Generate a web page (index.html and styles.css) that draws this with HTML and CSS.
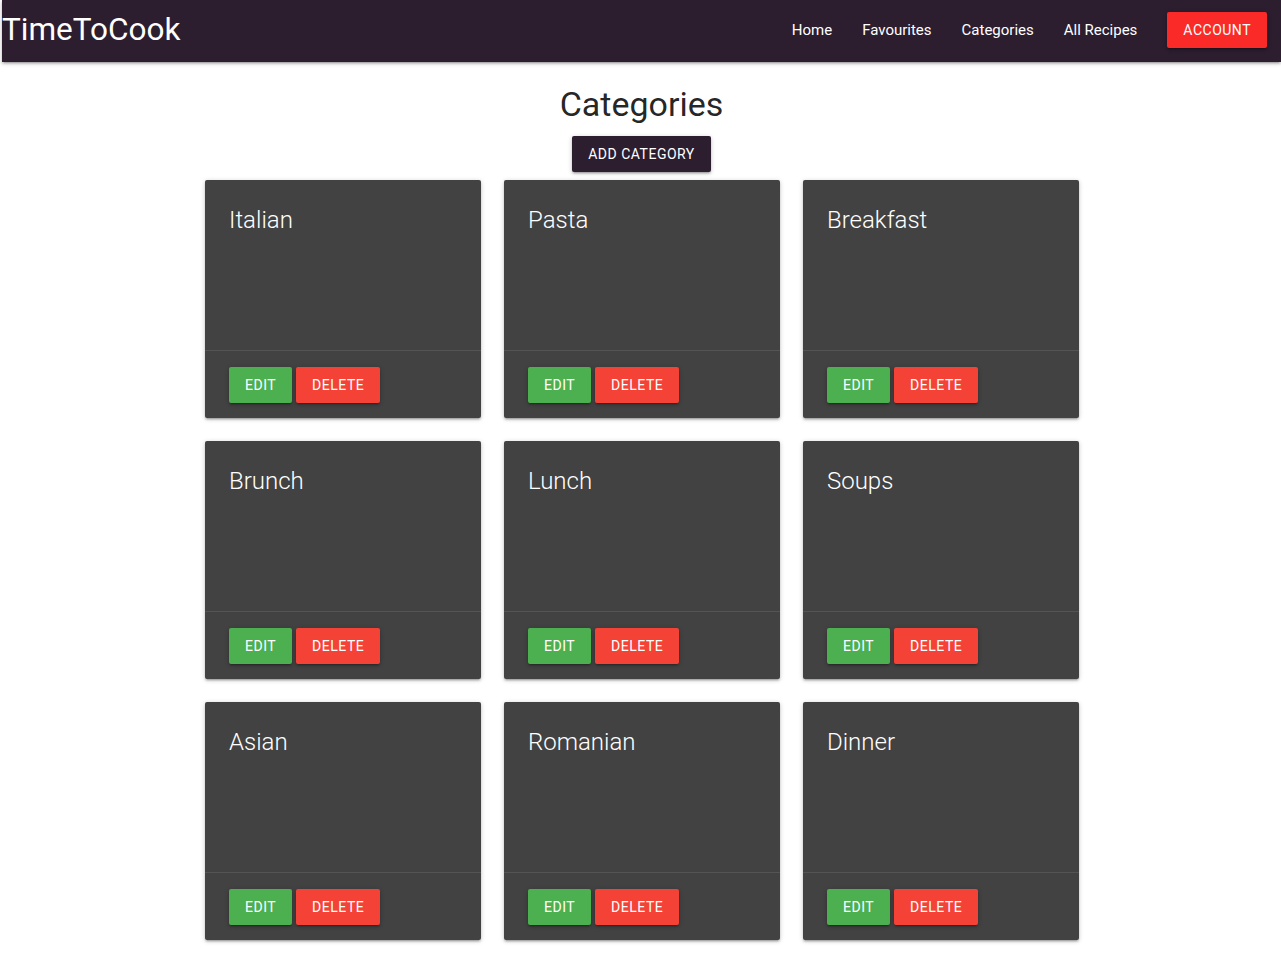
FILE: index.html
```html
<!DOCTYPE html>
<html lang="en">
<head>
<meta charset="utf-8">
<title>TimeToCook</title>
<link rel="stylesheet" href="styles.css">
</head>
<body>
<nav class="nav">
  <a class="brand" href="#">TimeToCook</a>
  <ul class="nav-links">
    <li><a href="#">Home</a></li>
    <li><a href="#">Favourites</a></li>
    <li><a href="#">Categories</a></li>
    <li><a href="#">All Recipes</a></li>
    <li><a class="btn btn-account" href="#">Account</a></li>
  </ul>
</nav>
<main class="main">
  <h4 class="page-title">Categories</h4>
  <a class="btn btn-add" href="#">Add Category</a>
  <div class="grid">
    <div class="card"><div class="card-content"><span class="card-title">Italian</span></div><div class="card-action"><a class="btn btn-edit" href="#">Edit</a><a class="btn btn-delete" href="#">Delete</a></div></div>
    <div class="card"><div class="card-content"><span class="card-title">Pasta</span></div><div class="card-action"><a class="btn btn-edit" href="#">Edit</a><a class="btn btn-delete" href="#">Delete</a></div></div>
    <div class="card"><div class="card-content"><span class="card-title">Breakfast</span></div><div class="card-action"><a class="btn btn-edit" href="#">Edit</a><a class="btn btn-delete" href="#">Delete</a></div></div>
    <div class="card"><div class="card-content"><span class="card-title">Brunch</span></div><div class="card-action"><a class="btn btn-edit" href="#">Edit</a><a class="btn btn-delete" href="#">Delete</a></div></div>
    <div class="card"><div class="card-content"><span class="card-title">Lunch</span></div><div class="card-action"><a class="btn btn-edit" href="#">Edit</a><a class="btn btn-delete" href="#">Delete</a></div></div>
    <div class="card"><div class="card-content"><span class="card-title">Soups</span></div><div class="card-action"><a class="btn btn-edit" href="#">Edit</a><a class="btn btn-delete" href="#">Delete</a></div></div>
    <div class="card"><div class="card-content"><span class="card-title">Asian</span></div><div class="card-action"><a class="btn btn-edit" href="#">Edit</a><a class="btn btn-delete" href="#">Delete</a></div></div>
    <div class="card"><div class="card-content"><span class="card-title">Romanian</span></div><div class="card-action"><a class="btn btn-edit" href="#">Edit</a><a class="btn btn-delete" href="#">Delete</a></div></div>
    <div class="card"><div class="card-content"><span class="card-title">Dinner</span></div><div class="card-action"><a class="btn btn-edit" href="#">Edit</a><a class="btn btn-delete" href="#">Delete</a></div></div>
  </div>
</main>
</body>
</html>
```

FILE: styles.css
```css
* { box-sizing: border-box; }
html, body { margin: 0; padding: 0; }
body {
  font-family: Roboto, "Liberation Sans", sans-serif;
  font-size: 15px;
  color: rgba(0,0,0,0.87);
  background: #fff;
}
a { text-decoration: none; color: inherit; }

.nav {
  margin-left: 2px;
  height: 62px;
  background: #2c1d2f;
  display: flex;
  align-items: flex-start;
  justify-content: space-between;
  box-shadow: 0 2px 2px 0 rgba(0,0,0,.14), 0 3px 1px -2px rgba(0,0,0,.12), 0 1px 5px 0 rgba(0,0,0,.2);
  color: #fff;
}
.brand {
  font-size: 31.5px;
  line-height: 60px;
  color: #fff;
}
.nav-links {
  list-style: none;
  margin: 0;
  padding: 0;
  display: flex;
  align-items: center;
  height: 60px;
}
.nav-links li a {
  display: block;
  padding: 0 15px;
  font-size: 15px;
  color: #fff;
}
.nav-links li a.btn-account {
  margin: 0 14px 0 15px;
  padding: 0 16px;
  font-size: 14px;
}

.btn {
  display: inline-block;
  height: 36px;
  line-height: 36px;
  padding: 0 16px;
  font-size: 14px;
  font-weight: 400;
  letter-spacing: .5px;
  text-transform: uppercase;
  color: #fff;
  border-radius: 2px;
  white-space: nowrap;
  box-shadow: 0 2px 2px 0 rgba(0,0,0,.14), 0 3px 1px -2px rgba(0,0,0,.12), 0 1px 5px 0 rgba(0,0,0,.2);
}
.btn-account { background: #f92a28; }
.btn-add { background: #2c1d2f; }
.btn-edit { background: #4caf50; }
.btn-delete { background: #f44336; }

.main {
  display: flex;
  flex-direction: column;
  align-items: center;
  padding-bottom: 20px;
}
.page-title {
  font-size: 34px;
  font-weight: 400;
  line-height: 40px;
  margin: 22px 0 12px 2px;
  color: rgba(0,0,0,0.87);
}
.btn-add { margin-left: 2px; }
.grid {
  margin-top: 8px;
  display: grid;
  grid-template-columns: repeat(3, 276px);
  column-gap: 23px;
  row-gap: 23px;
  margin-left: 3px;
}
.card {
  background: #424242;
  border-radius: 2px;
  box-shadow: 0 2px 2px 0 rgba(0,0,0,.14), 0 3px 1px -2px rgba(0,0,0,.12), 0 1px 5px 0 rgba(0,0,0,.2);
  display: flex;
  flex-direction: column;
}
.card-content {
  height: 170px;
  padding: 24px;
}
.card-title {
  display: block;
  font-size: 24px;
  font-weight: 300;
  line-height: 32px;
  color: #fff;
}
.card-action {
  border-top: 1px solid rgba(160,160,160,0.2);
  padding: 16px 24px 15px;
  display: flex;
  gap: 4px;
}
```
